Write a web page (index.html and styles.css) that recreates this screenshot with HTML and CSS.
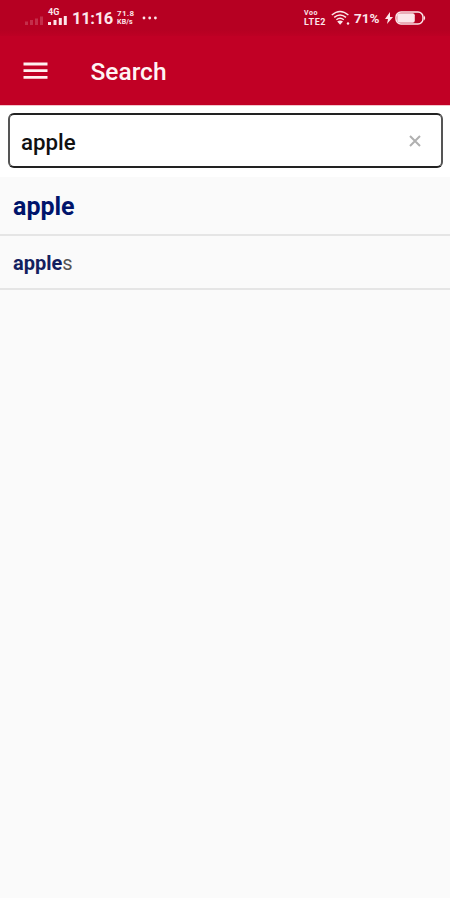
FILE: index.html
```
<!DOCTYPE html>
<html lang="en">
<head>
    <meta charset="UTF-8">
    <meta name="viewport" content="width=device-width, initial-scale=1.0">
    <title>Search</title>
    <link rel="stylesheet" href="styles.css">
</head>
<body>
    <!-- Phone status bar -->
    <div class="status-bar">
        <div class="status-left">
            <svg class="signal-weak" width="19" height="16" viewBox="0 0 19 16">
                <path d="M1.5 14v-3.5M6.5 14V9M11.5 14V7.5M16.5 14V5.5"/>
            </svg>
            <div class="signal">
                <span class="network-type">4G</span>
                <svg width="20" height="9" viewBox="0 0 20 9">
                    <path d="M1.5 9V6M7 9V4M12.3 9V2M17.3 9V0"/>
                </svg>
            </div>
            <span class="time">11:16</span>
            <div class="net-speed">
                <span>71.8</span>
                <span class="net-unit">KB/s</span>
            </div>
            <svg class="dots" width="16" height="4" viewBox="0 0 16 4">
                <circle cx="2" cy="2" r="1.4"/>
                <circle cx="7.7" cy="2" r="1.4"/>
                <circle cx="13.4" cy="2" r="1.4"/>
            </svg>
        </div>
        <div class="status-right">
            <div class="volte">
                <span class="volte-top">Voo</span>
                <span>LTE2</span>
            </div>
            <svg class="wifi" width="20" height="16" viewBox="0 0 20 16">
                <path d="M.8 5Q9-2.2 17.4 5M3.2 7.4Q9 2.6 15 7.4M5.4 9.8Q9 6.8 12.8 9.8"/>
                <path class="wifi-fill" d="M6.2 11.6Q9 9.4 12 11.6L9.1 14.8z"/>
                <circle class="wifi-fill" cx="17" cy="13.5" r="1.2"/>
            </svg>
            <span class="battery-text">71%</span>
            <svg class="bolt" width="8" height="12" viewBox="0 0 8 12">
                <path d="M5 0L0 7h3L2 12l6-7H5z"/>
            </svg>
            <svg class="battery" width="31" height="14" viewBox="0 0 31 14">
                <rect class="battery-outline" x="1" y="1" width="27" height="12" rx="5"/>
                <rect x="2.2" y="2.2" width="17.6" height="9.6" rx="2"/>
                <path d="M29 4.5q2.4 2.5 0 5z"/>
            </svg>
        </div>
    </div>

    <header class="app-bar">
        <svg class="menu-icon" width="25" height="18" viewBox="0 0 25 18">
            <path d="M.5 2h24M.5 8.7h24M.5 15.3h24"/>
        </svg>
        <h1 class="title">Search</h1>
    </header>

    <div class="search">
        <div class="search-box">
            <span class="search-text">apple</span>
            <svg class="clear-icon" width="12" height="12" viewBox="0 0 12 12">
                <path d="M1 1l10 10M11 1L1 11"/>
            </svg>
        </div>
    </div>

    <!-- Suggestions -->
    <ul class="results">
        <li class="result result-main"><b>apple</b></li>
        <li class="result"><b>apple</b>s</li>
    </ul>
</body>
</html>
```
FILE: styles.css
```
* {
    box-sizing: border-box;
}

body {
    margin: 0;
    height: 900px;
    display: flex;
    flex-direction: column;
    font-family: Roboto, sans-serif;
    background: #fafafa;
    border-bottom: 2px solid #fefefe;
    overflow: hidden;
}

.status-bar {
    display: flex;
    justify-content: space-between;
    height: 36px;
    padding: 0 24px 0 25px;
    background: linear-gradient(#b60022 30px, #bd0024);
    color: #fce6ea;
}

.status-left,
.status-right {
    display: flex;
    align-items: center;
    height: 36px;
}

.status-bar svg {
    display: block;
    flex: none;
    fill: #fce6ea;
}

.signal-weak path,
.signal path {
    stroke: #fce6ea;
    stroke-width: 3;
}

.signal-weak {
    opacity: 0.2;
    margin-top: 2px;
}

.signal {
    width: 20px;
    margin-left: 4px;
    margin-right: 4px;
    margin-bottom: 2px;
}

.network-type {
    display: block;
    height: 7px;
    font-size: 9px;
    line-height: 7px;
    font-weight: 700;
}

.time {
    width: 45px;
    font-size: 16.5px;
    font-weight: 700;
    letter-spacing: -0.3px;
}

.net-speed {
    display: flex;
    flex-direction: column;
    width: 25px;
    margin-bottom: 2px;
    font-size: 8px;
    line-height: 9px;
    font-weight: 700;
    letter-spacing: 0.3px;
}

.net-unit {
    font-size: 7px;
    line-height: 8px;
    letter-spacing: 0.2px;
}

.volte {
    display: flex;
    flex-direction: column;
    width: 27px;
    font-size: 9px;
    line-height: 10px;
    font-weight: 700;
    letter-spacing: 0.6px;
}

.volte-top {
    font-size: 7px;
    line-height: 8px;
}

.status-bar .wifi {
    fill: none;
    stroke: #fce6ea;
    stroke-width: 1.4;
}

.status-bar .wifi-fill {
    fill: #fce6ea;
    stroke: none;
}

.battery-text {
    width: 31px;
    margin-left: 3px;
    font-size: 13.5px;
    font-weight: 700;
}

.bolt {
    margin-right: 2px;
}

.status-bar .battery-outline {
    fill: none;
    stroke: #fce6ea;
    stroke-width: 1.5;
}

.app-bar {
    display: flex;
    align-items: center;
    height: 69px;
    padding-left: 23px;
    background: #c10025;
}

.menu-icon {
    stroke: #fff0f0;
    stroke-width: 2.8;
}

.title {
    margin: 3px 0 0 42.5px;
    color: #fff4f4;
    font-size: 24.5px;
    line-height: 30px;
    font-weight: 500;
}

.search {
    height: 72px;
    padding: 7px 7px 10px 8px;
    border-top: 1px solid #f3c4cc;
    background: #fff;
}

.search-box {
    display: flex;
    align-items: center;
    justify-content: space-between;
    height: 55px;
    padding: 0 20px 0 11px;
    border: 2px solid #222;
    border-left-color: #555;
    border-right-color: #555;
    border-radius: 6px;
}

.search-text {
    margin-top: 3px;
    color: #111;
    font-size: 22.3px;
    font-weight: 500;
}

.clear-icon {
    stroke: #b0b0b0;
    stroke-width: 2;
}

.results {
    margin: 0;
    padding: 0;
    list-style: none;
}

.result {
    height: 54px;
    padding-left: 13px;
    border-bottom: 2px solid #e5e5e5;
    color: #555;
    font-size: 20px;
    line-height: 55px;
}

.result b {
    color: #13205f;
    font-weight: 700;
}

.result-main {
    height: 59px;
    font-size: 25px;
    line-height: 60px;
}

.result-main b {
    color: #00146b;
}
```
